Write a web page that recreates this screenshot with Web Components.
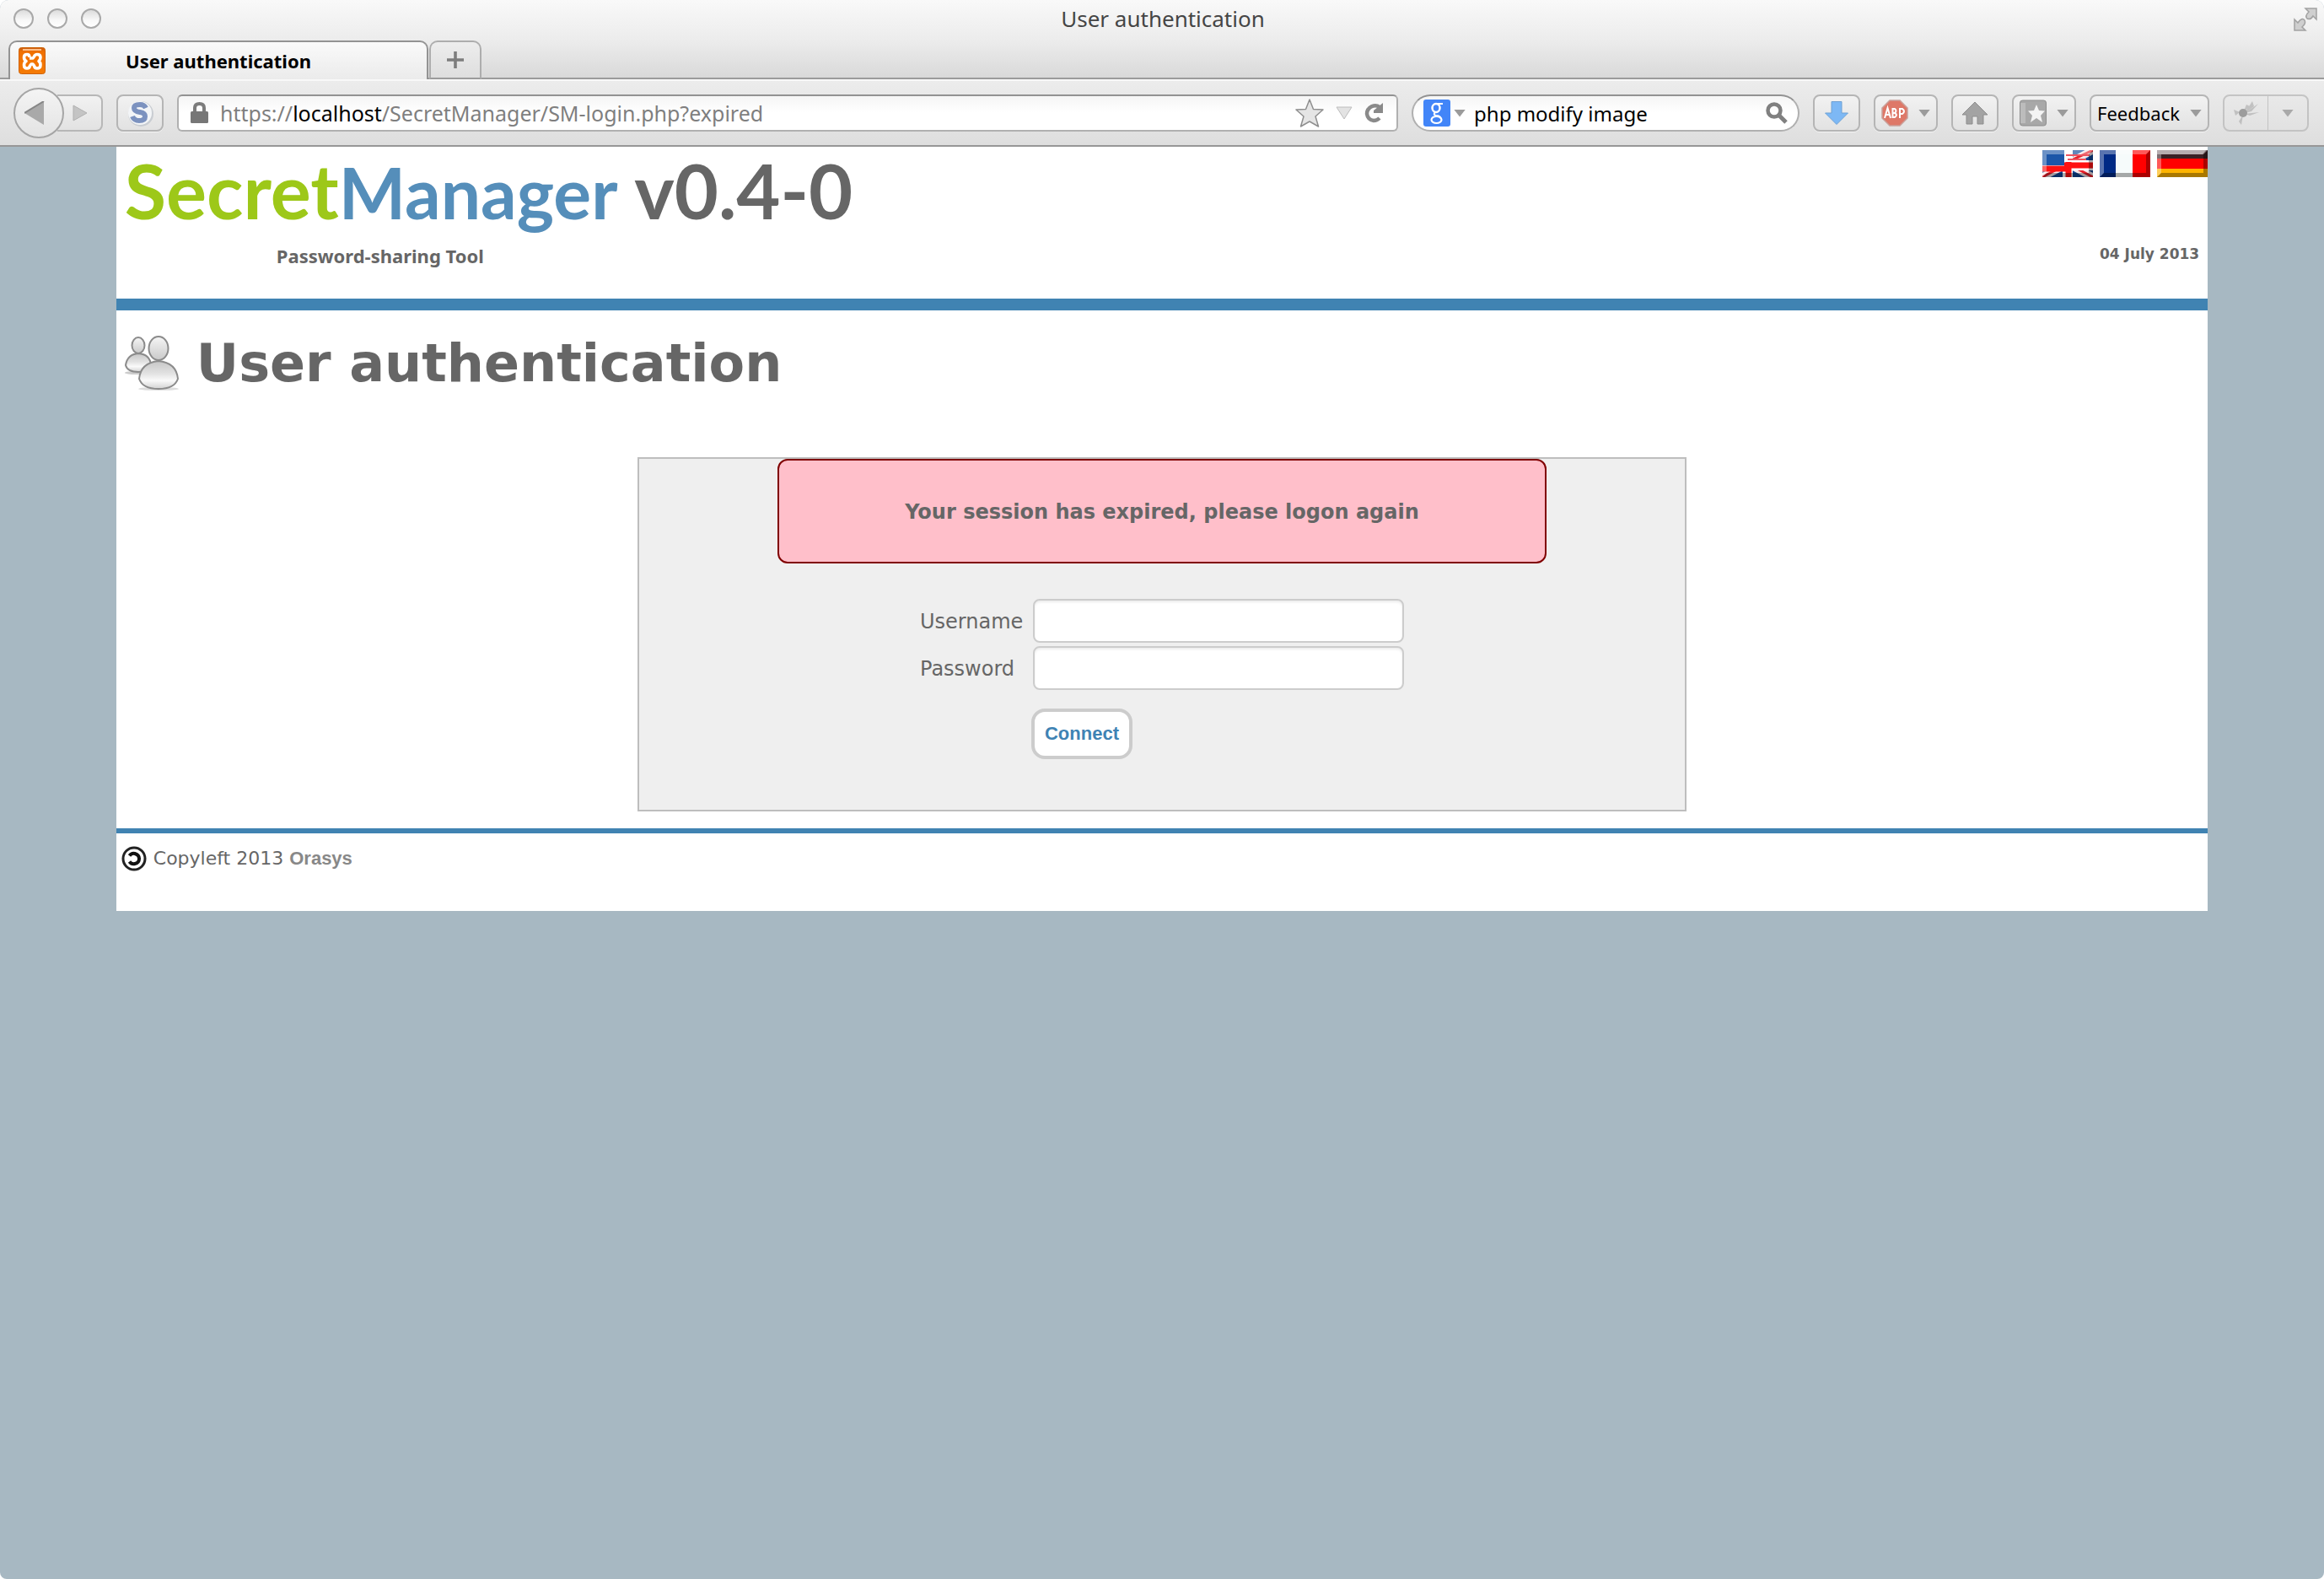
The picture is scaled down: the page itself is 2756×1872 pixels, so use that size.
<!DOCTYPE html>
<html lang="en">
<head>
<meta charset="utf-8">
<title>User authentication</title>
<style>
html{background:#fff}
body{margin:0;min-height:100vh;display:flex;font-family:"Noto Sans","Open Sans",sans-serif}
browser-window{flex:1}
</style>
</head>
<body>
<browser-window>
  <title-bar slot="chrome">User authentication</title-bar>
  <tab-strip slot="chrome">User authentication</tab-strip>
  <nav-toolbar slot="chrome"></nav-toolbar>
  <sm-page>
    <sm-header slot="header"></sm-header>
    <sm-heading>User authentication</sm-heading>
    <login-panel>Your session has expired, please logon again</login-panel>
    <sm-footer slot="footer"></sm-footer>
  </sm-page>
</browser-window>
<script>
const define = (name, html) => {
  const template = document.createElement('template');
  template.innerHTML = html;
  customElements.define(name, class extends HTMLElement {
    constructor() {
      super();
      this.attachShadow({mode: 'open'}).append(template.content.cloneNode(true));
    }
  });
};

define('browser-window', `
<style>
:host{display:flex;flex-direction:column;background:#a7b8c2;border-radius:10px 10px 8px 8px;overflow:hidden}
.chrome{display:grid;grid-template-rows:48px 46px 80px;background:linear-gradient(#f9f9f9,#ececec 48px,#d9d9d9 92px,#e8e8e8 92px)}
</style>
<div class="chrome"><slot name="chrome"></slot></div>
<slot></slot>`);

define('title-bar', `
<style>
:host{display:grid;grid-template-columns:1fr auto 1fr;align-items:start;padding:0 8px 0 10px;color:#454545;font-size:26px;line-height:44px}
.lights{display:flex;gap:16px;padding:10px 0 0 6px}
.lights button{width:24px;height:24px;padding:0;border:2px solid #a9a9a9;border-radius:50%;background:linear-gradient(#dcdcdc,#f8f8f8 60%,#fff)}
.full{justify-self:end;border:0;padding:9px 0 0;background:none;line-height:0}
</style>
<div class="lights"><button aria-label="Close"></button><button aria-label="Minimize"></button><button aria-label="Zoom"></button></div>
<span><slot></slot></span>
<button class="full" aria-label="Full screen"><svg width="28" height="28" viewBox="0 0 28 28"><path d="M14 1H27V14L23 10Q20 15 16 13 13 10 18 5ZM1 14V27H14L10 23Q15 19 13 15 10 11 5 18Z" fill="#cfcfcf" stroke="#a2a2a2" stroke-width="1.5"/></svg></button>`);

define('tab-strip', `
<style>
:host{display:flex;align-items:stretch;box-shadow:inset 0 -2px #9b9b9b}
.lead{width:10px}
.tab{display:flex;align-items:center;width:498px;box-sizing:border-box;border:2px solid #939393;border-bottom:0;border-radius:10px 10px 0 0;background:linear-gradient(#fafafa,#ebebeb);padding:0 10px;font-size:22px;font-weight:700;color:#000}
.tab svg{flex:none;margin-right:95px}
.new{width:62px;box-sizing:border-box;border:2px solid #adadad;border-radius:10px 10px 0 0;border-bottom-color:#9b9b9b;background:linear-gradient(#ededed,#dedede);padding:0;margin-left:1px;line-height:0}
</style>
<span class="lead"></span>
<div class="tab" role="tab">
<svg width="32" height="32" viewBox="0 0 32 32"><defs><linearGradient id="o" x2="0" y2="1"><stop stop-color="#c45a14"/><stop offset=".15" stop-color="#f07000"/><stop offset="1" stop-color="#f57b05"/></linearGradient></defs><rect x=".5" y=".5" width="31" height="31" rx="3" fill="url(#o)" stroke="#cf6204"/><path d="M5 3H27" stroke="#ffc089" stroke-width="2"/><path d="M13 12Q13 8.500 10 8.500 6.500 8.500 6.500 12 6.500 15 9 16.500 6.500 18 6.500 21 6.500 25 10 25 13 25 13.500 22L15 20H17L18.500 22Q19 25 22 25 26 25 26 21 26 18 24 16.500 26 15 26 12 26 8.500 22 8.500 19.500 8.500 18.500 11L17 13H13" fill="none" stroke="#fff" stroke-width="3.600" stroke-linejoin="round"/><path d="M13 16.500H17" stroke="#f57b05" stroke-width="2"/></svg>
<span><slot></slot></span></div>
<button class="new" aria-label="New tab"><svg width="20" height="20"><path d="M10 0V20M0 10H20" stroke="#7d7d7d" stroke-width="3.6"/></svg></button>`);

define('tool-button', `
<style>
:host{display:flex}
button{display:flex;align-items:center;justify-content:center;gap:12px;height:44px;min-width:56px;box-sizing:border-box;padding:0 7px;border:2px solid #b5b5b5;border-radius:8px;background:linear-gradient(#f2f2f2,#e2e2e2);box-shadow:0 1px #f4f4f4;font:22px "Noto Sans",sans-serif;color:#000}
</style>
<button><slot></slot></button>`);

define('menu-arrow', `
<style>:host{display:block;width:14px;height:9px;background:#9b9b9b;clip-path:polygon(0 0,100% 0,50% 100%)}</style>`);

define('nav-toolbar', `
<style>
:host{display:flex;align-items:center;gap:16px;box-sizing:border-box;padding:0 18px 0 16px;border-top:2px solid #f8f8f8;border-bottom:2px solid #979797;background:linear-gradient(#ececec,#dedede)}
button{font:inherit;color:inherit}
svg{display:block;flex:none}
.history{display:flex;align-items:center}
.back{z-index:1;width:60px;height:60px;padding:0 0 0 11px;border:2px solid #a5a5a5;border-radius:50%;background:linear-gradient(#f4f4f4,#e3e3e3)}
.fwd{width:54px;height:44px;margin-left:-8px;padding:0 0 0 18px;border:2px solid #b7b7b7;border-left:0;border-radius:0 8px 8px 0;background:linear-gradient(#f2f2f2,#e2e2e2)}
.field{display:flex;align-items:center;box-sizing:border-box;height:44px;border:2px solid #b0b0b0;border-top-color:#929292;background:linear-gradient(#f5f5f5,#fff 50%);font-size:25px;line-height:40px;color:#7f7f7f}
.url{flex:1;border-radius:6px;padding:0 14px}
.url [role=textbox]{flex:1;margin-left:14px;white-space:nowrap}
.url b{font-weight:400;color:#000}
.acts{display:flex;align-items:center;gap:14px}
.search{width:460px;border-radius:22px;padding:0 12px;gap:4px}
input{flex:1;min-width:0;margin-left:6px;padding:0;border:0;background:none;color:#000;font:24px "Noto Sans",sans-serif}
.bar{display:flex;gap:16px}
.last{display:flex;align-items:center;height:44px;box-sizing:border-box;border:2px solid #bcbcbc;border-radius:8px;opacity:.8}
.last button{display:flex;align-items:center;justify-content:center;width:52px;height:40px;padding:0;border:0;background:none}
.last button+button{width:46px;box-shadow:-1px 0 #bbb}
</style>
<div class="history">
<button class="back" aria-label="Back"><svg width="24" height="28"><path d="M0 14 23 0V28Z" fill="#a9a9a9"/><path d="M0 14 23 0" stroke="#858585" stroke-width="2"/></svg></button>
<button class="fwd" aria-label="Forward"><svg width="18" height="20"><path d="M1 1V19L17 10Z" fill="#c4c4c4" stroke="#b0b0b0"/></svg></button>
</div>
<tool-button><svg width="32" height="32" viewBox="0 0 32 32" aria-hidden="true"><circle cx="17" cy="17" r="15" fill="#c9cdd2"/><circle cx="16" cy="16" r="14" fill="#f3f5f7"/><path d="M23 10Q21 6 16 6 9 6 9 10 9 14 16 15 22 16 22 20 22 25 15 25 9 25 7 20" fill="none" stroke="#7c92bf" stroke-width="6"/></svg></tool-button>
<div class="field url">
<svg width="21" height="26"><path d="M5 12V7Q5 2 10.500 2T16 7V12" fill="none" stroke="#7c7c7c" stroke-width="4"/><rect y="11" width="21" height="14" rx="1.500" fill="#777"/></svg>
<span role="textbox" contenteditable="true" spellcheck="false" aria-label="Address">https://<b>localhost</b>/SecretManager/SM-login.php?expired</span>
<div class="acts">
<svg width="34" height="34" viewBox="0 0 34 34"><path d="M17 1 21.500 12.500 33 13 24 21 27.500 33 17 27 6.500 33 10 21 1 13 12.500 12.500Z" fill="#e5e5e5" stroke="#8f8f8f" stroke-width="1.500" stroke-linejoin="round"/></svg>
<svg width="20" height="16"><path d="M1 1H19L10 15Z" fill="#e3e3e3" stroke="#bdbdbd"/></svg>
<svg width="24" height="24" viewBox="0 0 24 24"><path d="M18 5Q14 2 9 4 3 7 3 13 4 20 11 21 15 21 18 18" fill="none" stroke="#8a8a8a" stroke-width="4.500"/><path d="M22 0V12H11V9Z" fill="#8a8a8a"/></svg>
</div></div>
<div class="field search">
<svg width="32" height="32" viewBox="0 0 32 32" aria-hidden="true"><rect width="32" height="32" rx="3" fill="#4285f8"/><g fill="none" stroke="#fff"><ellipse cx="15" cy="10" rx="4.500" ry="5" stroke-width="2.500"/><path d="M16 5H23M14 15Q11 18 15 19 20 19 21 23" stroke-width="2"/><ellipse cx="15.500" cy="24" rx="6" ry="4" stroke-width="2.200"/></g></svg>
<menu-arrow></menu-arrow>
<input aria-label="Search" value="php modify image">
<svg width="26" height="26" viewBox="0 0 26 26"><circle cx="10" cy="10" r="7.500" fill="none" stroke="#808080" stroke-width="4.500"/><path d="M15 15 24 24" stroke="#808080" stroke-width="5"/></svg>
</div>
<div class="bar">
<tool-button aria-label="Downloads"><svg width="28" height="28"><path d="M8 .5H20V14H27.500L14 27.500.5 14H8Z" fill="#7db8f5" stroke="#6fa1d4"/></svg></tool-button>
<tool-button aria-label="Adblock Plus"><svg width="32" height="32" viewBox="0 0 32 32"><path d="M10 1H22L31 10V22L22 31H10L1 22V10Z" fill="#de7868" stroke="#c9a09a" stroke-width="1.500"/><g fill="none" stroke="#fff" stroke-width="2"><path d="M4 22 7.500 10 11 22M5 18H10M13.500 21V11H16Q19 13.500 16 16 20 18 16 21ZM13 16H16M22 22V11H25Q29 14 25 17H22"/></g></svg><menu-arrow></menu-arrow></tool-button>
<tool-button aria-label="Home"><svg width="32" height="28"><path d="M16 1 31 16H26V27H19V18H13V27H6V16H1Z" fill="#a3a3a3" stroke="#8d8d8d"/></svg></tool-button>
<tool-button aria-label="Bookmarks"><svg width="32" height="32" viewBox="0 0 32 32"><rect x=".5" y="1" width="31" height="30" rx="3" fill="#a8a8a8" stroke="#8d8d8d"/><path d="M1 4V28H7V4Z" fill="#bcbcbc"/><path d="M20 6 23 13 30 13.500 25 19 27 27 20 22 13 27 15 19 10 13.500 17 13Z" fill="#f4f4f4"/></svg><menu-arrow></menu-arrow></tool-button>
<tool-button>Feedback<menu-arrow></menu-arrow></tool-button>
</div>
<div class="last"><button aria-label="Add-on"><svg width="32" height="32" viewBox="0 0 32 32"><g fill="#8b8b8b"><circle cx="12" cy="16" r="5"/><path d="M12 16 16 6 20 8ZM14 16 23 2 25 8ZM14 16 30 5 22 14ZM14 17 31 15 20 19ZM12 18 10 30 7 26ZM8 15 1 12 3 19Z" opacity=".5"/></g></svg></button><button aria-label="Add-on menu"><menu-arrow></menu-arrow></button></div>`);

define('sm-page', `
<style>
:host{display:block;width:90%;margin:0 auto;background:#fff;color:#666;font-family:Verdana,"DejaVu Sans",sans-serif}
main{display:block;padding-bottom:20px}
</style>
<slot name="header"></slot><main><slot></slot></main><slot name="footer"></slot>`);

define('flag-icon', `
<style>
:host{display:block;line-height:0}
a{display:block}
</style>
<a href="#"><svg width="60" height="32" viewBox="0 0 60 32"><g class="art"></g><path d="M0 0H60L55 5H5V27L0 32Z" fill="#fff" opacity=".35"/><path d="M0 32 5 27H55V5L60 0V32Z" fill="#000" opacity=".33"/></svg></a>`);
const flags = {
  English: '<path d="M0 0H60V32H0Z" fill="#0f4595"/><path d="M0 0 60 32M60 0 0 32" stroke="#f5e7ea" stroke-width="9"/><path d="M30 14 60 0M30 16 0 32M30 16 60 32" stroke="#e8202a" stroke-width="3"/><path d="M30 0V32M0 18H60" stroke="#fff" stroke-width="12"/><path d="M28 6H56M30 11H52" stroke="#ee5560" stroke-width="2"/><path d="M0 0H26V18H0Z" fill="#1c56a8"/><path d="M31 14V32M26 18H60M0 22H28" stroke="#f11" stroke-width="7"/>',
  Français: '<path d="M0 0H19V32H0Z" fill="#002a85"/><path d="M19 0H39V32H19Z" fill="#f6fbfb"/><path d="M39 0H60V32H39Z" fill="#f00"/>',
  Deutsch: '<path d="M0 0H60V10H0Z" fill="#3a2025"/><path d="M0 0H58L54 5H0Z" fill="#8f8085"/><path d="M0 10H60V22H0Z" fill="#f00"/><path d="M0 22H60V32H0Z" fill="#fdb400"/>'
};

define('sm-header', `
<style>
:host{display:flex;justify-content:space-between;box-sizing:border-box;height:194px;border-bottom:14px solid #4083b2;padding-top:4px;font-weight:700}
.logo{padding-left:10px;font:700 90px/94px Lato,sans-serif;white-space:nowrap}
.s{color:#9dc819}.m{color:#558eba;font-size:84px}
.tag{padding-left:190px;font:700 22px/32px "Noto Sans",sans-serif;margin-top:12px}
.side{display:flex;flex-direction:column;align-items:flex-end}
.flags{display:flex;gap:8px}
time{margin-top:76px;padding-right:10px;font-size:17px;line-height:30px;font-family:"DejaVu Sans",sans-serif}
</style>
<div><div class="logo"><span class="s">Secret</span><span class="m">Manager</span> v0.4-0</div><div class="tag">Password-sharing Tool</div></div>
<div class="side"><nav class="flags"><flag-icon lang="English"></flag-icon><flag-icon lang="Français"></flag-icon><flag-icon lang="Deutsch"></flag-icon></nav><time datetime="2013-07-04">04 July 2013</time></div>`);
for (const flag of document.querySelector('sm-header').shadowRoot.querySelectorAll('flag-icon')) {
  const name = flag.getAttribute('lang');
  flag.shadowRoot.querySelector('.art').innerHTML = flags[name];
  flag.shadowRoot.querySelector('a').setAttribute('aria-label', name);
}

define('sm-heading', `
<style>
:host{display:flex;align-items:center;gap:20px;padding:27px 10px 0}
h1{margin:0;font-size:62px;line-height:72px}
svg{flex:none}
</style>
<svg width="65" height="66" viewBox="0 0 65 66"><defs><linearGradient id="g" x2="0" y2="1"><stop stop-color="#c6c6c6"/><stop offset=".45" stop-color="#e2e2e2"/><stop offset=".7" stop-color="#fafafa"/><stop offset="1" stop-color="#d2d2d2"/></linearGradient><linearGradient id="h" x2="0" y2="1"><stop stop-color="#f6f6f6"/><stop offset="1" stop-color="#c9c9c9"/></linearGradient></defs><ellipse cx="40" cy="63" rx="24" ry="2" fill="#ddd"/><ellipse cx="14" cy="44" rx="14" ry="2" fill="#ccc"/><g stroke="#8b8b8b" stroke-width="2"><path d="M1 35Q3 22 16 21 30 22 31 35 28 43 16 43 3 43 1 35Z" fill="url(#g)"/><ellipse cx="16" cy="11.500" rx="7.500" ry="9.500" fill="url(#h)"/><path d="M17 51Q19 32 40 30 61 32 63 51 59 63 40 63 21 63 17 51Z" fill="url(#g)"/><ellipse cx="40" cy="15" rx="11.500" ry="14" fill="url(#h)"/></g></svg>
<h1><slot></slot></h1>`);

define('form-field', `
<style>
:host{display:grid;grid-template-columns:132px 444px;align-items:center;font-size:24px}
label{padding-top:2px}
input{box-sizing:border-box;height:52px;margin:0 2px;padding:0 10px;border:2px solid #ccc;border-radius:8px;background:#fff;box-shadow:inset 0 2px 3px #ececec;font:inherit;color:inherit}
</style>
<label for="f"></label><input id="f">`);

define('login-panel', `
<style>
:host{display:block;box-sizing:border-box;width:1244px;max-width:100%;margin:75px auto 0;border:2px solid #bebebe;background:#efefef;padding-bottom:60px}
.alert{box-sizing:border-box;width:912px;margin:0 auto;padding:41px 20px 39px;border:2px solid #800000;border-radius:12px;background:#ffbfca;text-align:center;font-size:24px;line-height:40px;font-weight:700}
form{display:grid;gap:4px;width:574px;margin:42px auto 0}
button{justify-self:start;margin:18px 0 0 132px;box-sizing:border-box;height:60px;padding:0 12px;border:4px solid #ccc;border-radius:16px;background:#fff;color:#3f83b4;font:700 22px "Liberation Sans",Arial,sans-serif}
</style>
<div class="alert" role="alert"><slot></slot></div>
<form><form-field name="Username" type="text"></form-field><form-field name="Password" type="password"></form-field><button type="button">Connect</button></form>`);
for (const field of document.querySelector('login-panel').shadowRoot.querySelectorAll('form-field')) {
  field.shadowRoot.querySelector('label').textContent = field.getAttribute('name');
  field.shadowRoot.querySelector('input').type = field.getAttribute('type');
}

define('sm-footer', `
<style>
:host{display:flex;align-items:center;gap:8px;border-top:6px solid #4083b2;padding:15px 6px 47px;font-size:22px;line-height:30px}
a{color:#888;font:700 22px "Liberation Sans",Arial,sans-serif;text-decoration:none}
</style>
<svg width="30" height="30" viewBox="0 0 30 30"><circle cx="15" cy="15" r="13" fill="#fff" stroke="#222" stroke-width="3"/><path d="M9.500 11.500Q12 8 16 9 21 10.500 21 15 21 20 16 21 12 22 9.500 18.500" fill="none" stroke="#111" stroke-width="4"/></svg>
<span>Copyleft 2013 <a href="#">Orasys</a></span>`);
</script>
</body>
</html>
